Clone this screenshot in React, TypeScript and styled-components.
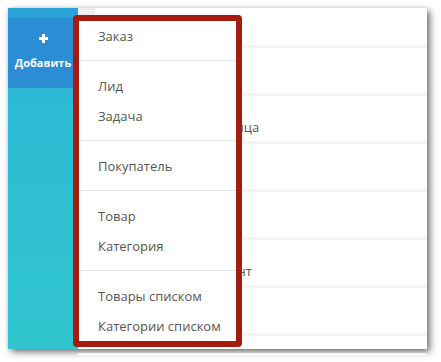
import React, { FunctionComponent } from "react";
import styled, { createGlobalStyle } from "styled-components";

const GlobalStyle = createGlobalStyle`
  html, body {
    margin: 0;
    padding: 0;
    background: #ffffff;
    font-family: "Open Sans", "Liberation Sans", sans-serif;
  }
`;

const Page = styled.div`
  width: 441px;
  height: 362px;
  padding: 8px 0 0 8px;
  box-sizing: border-box;
`;

const Window = styled.div`
  position: relative;
  width: 419px;
  height: 341px;
  display: flex;
  background: #ffffff;
  box-shadow: 3px 3px 7px rgba(0, 0, 0, 0.55), 0 0 3px rgba(0, 0, 0, 0.12);
`;

const Sidebar = styled.div`
  width: 70px;
  flex-shrink: 0;
  padding-top: 10px;
  box-sizing: border-box;
  background: linear-gradient(180deg, #29a2d8 0%, #2cbbd4 28%, #31c5ce 100%);
`;

const AddButton = styled.div`
  height: 70px;
  display: flex;
  flex-direction: column;
  align-items: center;
  justify-content: center;
  gap: 12px;
  padding-bottom: 2px;
  box-sizing: border-box;
  background: #2b8dd4;
  color: #ffffff;
  font-size: 11px;
  font-weight: 700;
`;

const Main = styled.div`
  position: relative;
  flex: 1;
  display: flex;
  flex-direction: column;
`;

const Row = styled.div<{ $height: number }>`
  height: ${p => p.$height}px;
  flex-shrink: 0;
  display: flex;
  align-items: flex-end;
  padding: 0 0 5px 71px;
  box-sizing: border-box;
  border-bottom: 3px solid #f3f3f3;
  font-size: 13px;
  line-height: 18px;
  color: #555555;
  white-space: nowrap;
`;

const TopTab = styled.div`
  position: absolute;
  left: 0;
  top: 0;
  width: 17px;
  height: 10px;
  background: #eeeeee;
`;

const Dropdown = styled.div`
  position: absolute;
  left: 65px;
  top: 7px;
  width: 169px;
  box-sizing: border-box;
  border: 6px solid #a61b10;
  border-radius: 4px;
  background: #ffffff;
`;

const Item = styled.div`
  height: 30px;
  line-height: 30px;
  padding-left: 19px;
  font-size: 13px;
  color: #555555;
  white-space: nowrap;
`;

const Divider = styled.div`
  height: 1px;
  margin: 9px 0 10px;
  background: #e6e6e6;
`;

const PlusIcon = () => (
  <svg width="9" height="9" viewBox="0 0 9 9">
    <rect x="3" y="0" width="3" height="9" fill="#ffffff" />
    <rect x="0" y="3" width="9" height="3" fill="#ffffff" />
  </svg>
);

const groups = [
  ["Заказ"],
  ["Лид", "Задача"],
  ["Покупатель"],
  ["Товар", "Категория"],
  ["Товары списком", "Категории списком"],
];

const rows = [
  { height: 40, text: "" },
  { height: 48, text: "" },
  { height: 48, text: "Контактные лица" },
  { height: 48, text: "" },
  { height: 48, text: "" },
  { height: 48, text: "Главный клиент" },
  { height: 48, text: "" },
  { height: 20, text: "" },
];

const App: FunctionComponent = () => {
  return (
    <Page>
      <GlobalStyle />
      <Window>
        <Sidebar>
          <AddButton>
            <PlusIcon />
            Добавить
          </AddButton>
        </Sidebar>
        <Main>
          <TopTab />
          {rows.map((row, index) => (
            <Row key={index} $height={row.height}>
              {row.text}
            </Row>
          ))}
        </Main>
        <Dropdown>
          {groups.map((group, index) => (
            <React.Fragment key={index}>
              {index > 0 ? <Divider /> : null}
              {group.map(label => (
                <Item key={label}>{label}</Item>
              ))}
            </React.Fragment>
          ))}
        </Dropdown>
      </Window>
    </Page>
  );
};

export default App;
